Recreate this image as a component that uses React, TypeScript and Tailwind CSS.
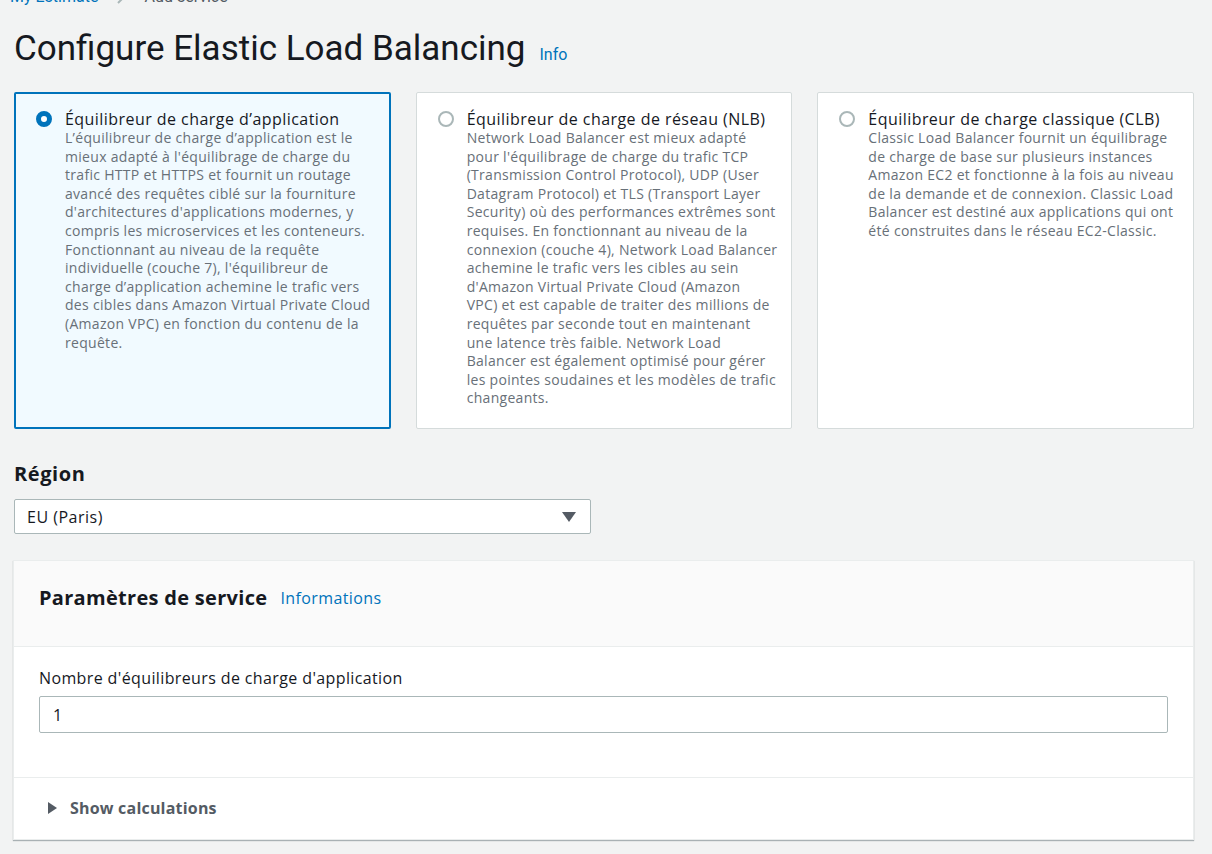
import type { ReactNode } from "react"

const font = "font-['Open_Sans','Noto_Sans',sans-serif]"

const options: { title: string; text: ReactNode; selected: boolean }[] = [
  {
    title: "Équilibreur de charge d’application",
    text: "L’équilibreur de charge d’application est le mieux adapté à l'équilibrage de charge du trafic HTTP et HTTPS et fournit un routage avancé des requêtes ciblé sur la fourniture d'architectures d'applications modernes, y compris les microservices et les conteneurs. Fonctionnant au niveau de la requête individuelle (couche 7), l'équilibreur de charge d’application achemine le trafic vers des cibles dans Amazon Virtual Private Cloud (Amazon VPC) en fonction du contenu de la requête.",
    selected: true,
  },
  {
    title: "Équilibreur de charge de réseau (NLB)",
    text: (
      <>
        Network Load Balancer est mieux adapté pour l'équilibrage de charge du trafic TCP (Transmission Control Protocol), UDP (User Datagram Protocol) et TLS (Transport Layer Security) où des performances extrêmes sont requises. En fonctionnant au niveau de la connexion (couche 4), Network Load Balancer achemine le trafic vers les cibles au sein d'Amazon Virtual Private Cloud (Amazon
        <br />
        VPC) et est capable de traiter des millions de requêtes par seconde tout en maintenant une latence très faible. Network Load Balancer est également optimisé pour gérer les pointes soudaines et les modèles de trafic changeants.
      </>
    ),
    selected: false,
  },
  {
    title: "Équilibreur de charge classique (CLB)",
    text: "Classic Load Balancer fournit un équilibrage de charge de base sur plusieurs instances Amazon EC2 et fonctionne à la fois au niveau de la demande et de connexion. Classic Load Balancer est destiné aux applications qui ont été construites dans le réseau EC2-Classic.",
    selected: false,
  },
]

export default function App() {
  return (
    <div className={`min-h-[854px] bg-[#f2f3f3] text-[#16191f] ${font} overflow-hidden`}>
      <div className="px-[14px] pr-[18px]">
        {/* breadcrumb, mostly scrolled off the top */}
        <div className="-mt-[13px] flex items-center gap-[18px] text-[16px] leading-[20px] font-['Roboto',sans-serif]">
          <span className="text-[#0073bb] -ml-[4px]">My Estimate</span>
          <svg width="10" height="14" viewBox="0 0 10 14" className="text-[#aab7b8]">
            <path d="M2 1l6 6-6 6" fill="none" stroke="currentColor" strokeWidth="2" />
          </svg>
          <span className="text-[#545b64]">Add service</span>
        </div>

        <div className="mt-[20px] flex items-baseline gap-[14px]">
          <h1 className="text-[35px] leading-[44px] font-normal font-['Roboto',sans-serif]">Configure Elastic Load Balancing</h1>
          <span className="text-[16px] text-[#0073bb] font-['Roboto',sans-serif]">Info</span>
        </div>

        <div className="mt-[21px] grid grid-cols-3 gap-[25px]">
          {options.map((o) => (
            <div
              key={o.title}
              className={
                o.selected
                  ? "h-[337px] border-2 border-[#0073bb] bg-[#f1faff] rounded-[2px] pl-[20px] pr-[16px] pt-[15px] flex gap-[13px]"
                  : "h-[337px] border border-[#d5dbdb] bg-white rounded-[2px] pl-[21px] pr-[11px] pt-[16px] flex gap-[13px]"
              }
            >
              <div className="pt-[2px] shrink-0">
                {o.selected ? (
                  <div className="w-[16px] h-[16px] rounded-full border-[5px] border-[#0073bb] bg-white" />
                ) : (
                  <div className="w-[16px] h-[16px] rounded-full border-2 border-[#aab7b8] bg-white" />
                )}
              </div>
              <div>
                <div className="text-[16px] leading-[20px] tracking-[0.45px]">{o.title}</div>
                <p className="text-[14px] leading-[18.6px] tracking-[0.3px] text-[#687078]">{o.text}</p>
              </div>
            </div>
          ))}
        </div>

        <div className="mt-[33px] text-[20px] leading-[24px] font-bold tracking-[0.6px]">Région</div>
        <div className="mt-[13px] w-[577px] h-[35px] border border-[#aab7b8] bg-white rounded-[2px] flex items-center justify-between pl-[12px] pr-[14px]">
          <span className="text-[16px] tracking-[0.5px]">EU (Paris)</span>
          <svg width="14" height="10" viewBox="0 0 14 10">
            <path d="M0 0h14L7 10z" fill="#545b64" />
          </svg>
        </div>

        <div className="mt-[26px] bg-white border border-[#eaeded] shadow-[0_1px_1px_0_rgba(0,28,36,0.3)] -ml-[1px]">
          <div className="h-[86px] bg-[#fafafa] border-b border-[#eaeded] flex items-start pt-[23px] px-[25px] gap-[13px]">
            <span className="text-[20px] leading-[27px] font-bold tracking-[0.3px]">Paramètres de service</span>
            <span className="text-[16px] leading-[27px] pt-[1px] text-[#0073bb] tracking-[0.4px]">Informations</span>
          </div>
          <div className="px-[25px] pt-[21px] pb-[44px] border-b border-[#eaeded]">
            <div className="text-[16px] leading-[20px] tracking-[0.38px]">Nombre d'équilibreurs de charge d'application</div>
            <div className="mt-[8px] h-[37px] border border-[#aab7b8] rounded-[2px] bg-white flex items-center pl-[13px] text-[16px]">1</div>
          </div>
          <div className="h-[61px] flex items-center pb-[2px] pl-[34px] gap-[13px] text-[#545b64]">
            <svg width="9" height="12" viewBox="0 0 9 12">
              <path d="M0 0l9 6-9 6z" fill="#545b64" />
            </svg>
            <span className="text-[16px] font-bold tracking-[0.2px]">Show calculations</span>
          </div>
        </div>
      </div>
    </div>
  )
}
